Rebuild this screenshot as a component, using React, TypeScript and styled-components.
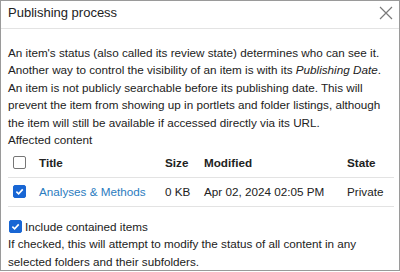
import styled, { createGlobalStyle } from "styled-components"

const GlobalStyle = createGlobalStyle`
    html, body {
        margin: 0;
        padding: 0;
        background: #fff;
    }
    body {
        font-family: 'Liberation Sans', Arial, sans-serif;
        color: #222;
    }
`

const Dialog = styled.div`
    box-sizing: border-box;
    width: 400px;
    height: 271px;
    border: 1px solid #9a9a9a;
    background: #fff;
    display: flex;
    flex-direction: column;
    overflow: hidden;
`

const Header = styled.div`
    box-sizing: border-box;
    height: 33px;
    padding: 4px 6px 0 7px;
    display: flex;
    align-items: flex-start;
    justify-content: space-between;
    border-bottom: 1px solid #e3e3e3;
`

const Title = styled.h1`
    margin: 0;
    font-size: 13px;
    line-height: 16px;
    font-weight: 400;
    color: #222;
`

const Close = styled.button`
    border: 0;
    padding: 0;
    margin-top: 1px;
    background: none;
    width: 14px;
    height: 14px;
    display: flex;
    cursor: pointer;
`

const Body = styled.div`
    padding: 15px 7px 0 7px;
    font-size: 11.7px;
    line-height: 17.5px;
`

const Texto = styled.p`
    margin: 0;
`

const Tabela = styled.table`
    width: 386px;
    border-collapse: collapse;
    font-size: 11.7px;
`

const Th = styled.th<{ $w?: number }>`
    text-align: left;
    font-weight: 700;
    height: 28px;
    padding: 0;
    width: ${p => (p.$w ? `${p.$w}px` : "auto")};
    border-bottom: 1px solid #e3e3e3;
`

const Td = styled.td`
    height: 28px;
    padding: 0;
    border-bottom: 1px solid #e3e3e3;
    white-space: nowrap;
`

const CaixaCelula = styled.div`
    display: flex;
    justify-content: center;
    padding-right: 8px;
`

const Caixa = styled.span<{ $checked?: boolean }>`
    box-sizing: border-box;
    width: 13px;
    height: 13px;
    border-radius: 2px;
    display: inline-flex;
    align-items: center;
    justify-content: center;
    flex-shrink: 0;
    background: ${p => (p.$checked ? "#1866d4" : "#fff")};
    border: 1px solid ${p => (p.$checked ? "#1866d4" : "#767676")};
`

const Link = styled.a`
    color: #2b7cc0;
    text-decoration: none;
`

const Incluir = styled.label`
    display: flex;
    align-items: center;
    gap: 3px;
    margin-top: 11px;
    padding-left: 1px;
`

const Checkbox = ({ checked }: { checked?: boolean }) => (
    <Caixa $checked={checked}>
        {checked && (
            <svg width="9" height="9" viewBox="0 0 10 10">
                <path d="M1.5 5.2 L4 7.6 L8.6 2.6" fill="none" stroke="#fff" strokeWidth="1.8" />
            </svg>
        )}
    </Caixa>
)

const App = () => {
    return (
        <>
            <GlobalStyle />
            <Dialog>
                <Header>
                    <Title>Publishing process</Title>
                    <Close aria-label="Close">
                        <svg width="14" height="14" viewBox="0 0 14 14">
                            <path d="M1 1 L13 13 M13 1 L1 13" stroke="#7a7a7a" strokeWidth="1.2" />
                        </svg>
                    </Close>
                </Header>
                <Body>
                    <Texto>
                        An item's status (also called its review state) determines who can see it.
                        Another way to control the visibility of an item is with its <em>Publishing Date</em>.
                        An item is not publicly searchable before its publishing date. This will
                        prevent the item from showing up in portlets and folder listings, although
                        the item will still be available if accessed directly via its URL.
                    </Texto>
                    <Texto>Affected content</Texto>
                    <Tabela>
                        <thead>
                            <tr>
                                <Th $w={31}><CaixaCelula><Checkbox /></CaixaCelula></Th>
                                <Th $w={126}>Title</Th>
                                <Th $w={39}>Size</Th>
                                <Th $w={143}>Modified</Th>
                                <Th>State</Th>
                            </tr>
                        </thead>
                        <tbody>
                            <tr>
                                <Td><CaixaCelula><Checkbox checked /></CaixaCelula></Td>
                                <Td><Link href="#">Analyses &amp; Methods</Link></Td>
                                <Td>0 KB</Td>
                                <Td>Apr 02, 2024 02:05 PM</Td>
                                <Td>Private</Td>
                            </tr>
                        </tbody>
                    </Tabela>
                    <Incluir>
                        <Checkbox checked />
                        Include contained items
                    </Incluir>
                    <Texto>
                        If checked, this will attempt to modify the status of all content in any
                        selected folders and their subfolders.
                    </Texto>
                </Body>
            </Dialog>
        </>
    )
}

export default App
